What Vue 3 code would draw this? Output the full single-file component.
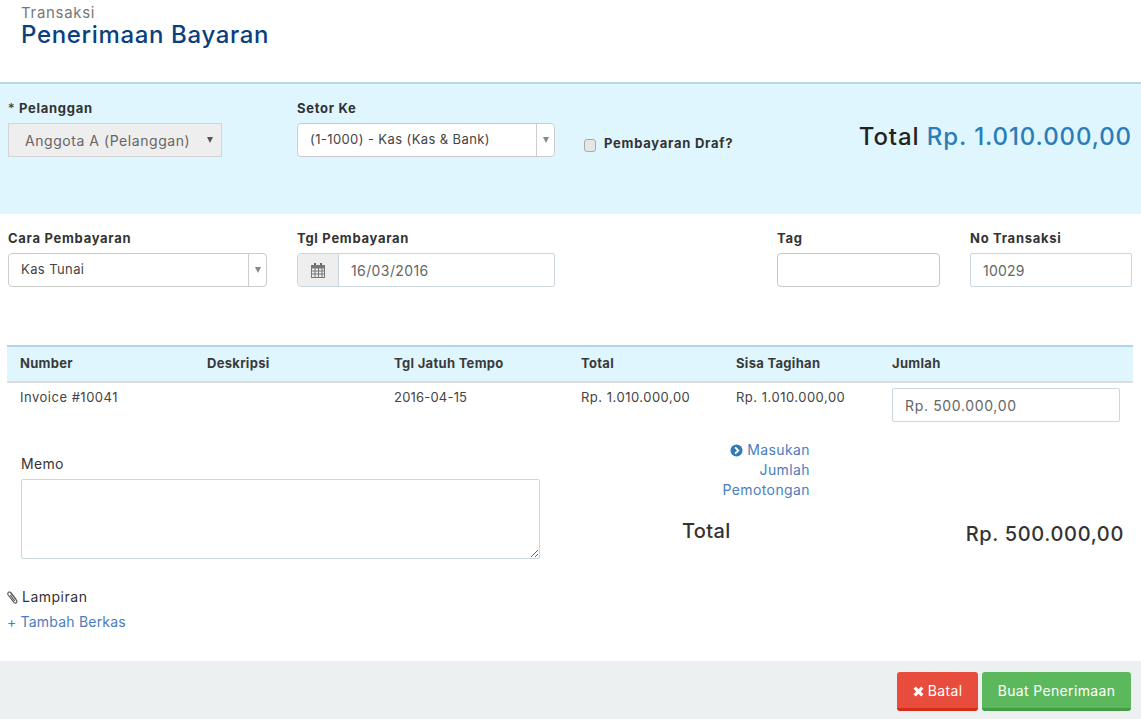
<template>
	<div class="page">
		<!-- Header -->
		<header class="page-head">
			<div class="crumb">Transaksi</div>
			<h1 class="title">Penerimaan Bayaran</h1>
		</header>

		<!-- Customer panel -->
		<section class="panel">
			<div class="field field-customer">
				<label class="label"><span class="req">*</span> Pelanggan</label>
				<div class="select-disabled">
					<span>Anggota A (Pelanggan)</span>
					<span class="caret caret-dark"></span>
				</div>
			</div>
			<div class="field field-deposit">
				<label class="label">Setor Ke</label>
				<div class="combo">
					<span class="combo-text">(1-1000) - Kas (Kas &amp; Bank)</span>
					<span class="combo-arrow"><span class="caret"></span></span>
				</div>
			</div>
			<label class="draft">
				<input type="checkbox" class="draft-check" />
				<span>Pembayaran Draf?</span>
			</label>
			<div class="grand-total">Total <span class="grand-amount">Rp. 1.010.000,00</span></div>
		</section>

		<!-- Payment fields -->
		<section class="payment">
			<div class="field field-method">
				<label class="label">Cara Pembayaran</label>
				<div class="combo">
					<span class="combo-text">Kas Tunai</span>
					<span class="combo-arrow"><span class="caret"></span></span>
				</div>
			</div>
			<div class="field field-date">
				<label class="label">Tgl Pembayaran</label>
				<div class="date-group">
					<span class="date-addon">
						<svg class="cal-icon" viewBox="0 0 14 15">
							<path fill="#666" d="M3 0h2v3H3zM9 0h2v3H9z" />
							<path fill="#777" fill-rule="evenodd" d="M0 2h14v13H0zM1 5.500v2h2.500v-2zm3.500 0v2H7v-2zm3.500 0v2h2.500v-2zm3.500 0v2H13v-2zM1 8.500v2h2.500v-2zm3.500 0v2H7v-2zm3.500 0v2h2.500v-2zm3.500 0v2H13v-2zM1 11.500V14h2.500v-2.500zm3.500 0V14H7v-2.500zm3.500 0V14h2.500v-2.500zm3.500 0V14H13v-2.500z" />
						</svg>
					</span>
					<input class="date-input" value="16/03/2016" />
				</div>
			</div>
			<div class="field field-tag">
				<label class="label">Tag</label>
				<input class="input input-tag" />
			</div>
			<div class="field field-no">
				<label class="label">No Transaksi</label>
				<input class="input" value="10029" />
			</div>
		</section>

		<!-- Invoice table -->
		<section class="table-wrap">
			<div class="row row-head">
				<div v-for="col in columns" :key="col" class="cell">{{ col }}</div>
			</div>
			<div class="row row-body">
				<div class="cell">Invoice #10041</div>
				<div class="cell"></div>
				<div class="cell cell-date">2016-04-15</div>
				<div class="cell">Rp. 1.010.000,00</div>
				<div class="cell">Rp. 1.010.000,00</div>
				<div class="cell cell-amount"><input class="input input-amount" value="Rp. 500.000,00" /></div>
			</div>
		</section>

		<!-- Memo and totals -->
		<section class="lower">
			<div class="memo">
				<label class="memo-label">Memo</label>
				<textarea class="memo-box"></textarea>
			</div>
			<div class="summary">
				<a class="deduct">
					<svg class="chev-icon" viewBox="0 0 14 14">
						<circle cx="7" cy="7" r="6.500" fill="#337ab7" />
						<path d="M5.500 3.600 9 7l-3.500 3.400" fill="none" stroke="#fff" stroke-width="2" />
					</svg>
					Masukan Jumlah Pemotongan
				</a>
				<div class="sum-row">
					<span class="sum-label">Total</span>
					<span class="sum-value">Rp. 500.000,00</span>
				</div>
			</div>
		</section>

		<!-- Attachments -->
		<section class="attach">
			<div class="attach-title">
				<svg class="clip-icon" viewBox="0 0 11 13">
					<path d="M3.600 1.800 9.400 9.200c1.500 2-1 3.900-2.600 2L1.200 4C-.2 2 2.300-.2 3.900 1.700l5 6.400M3.200 4l4.600 6" fill="none" stroke="#5a5a5a" stroke-width="1.200" />
				</svg>
				Lampiran
			</div>
			<a class="add-file">+ Tambah Berkas</a>
		</section>

		<!-- Footer actions -->
		<footer class="actions">
			<button class="btn btn-cancel">
				<svg class="x-icon" viewBox="0 0 10 10">
					<path d="M1.500 1.500l7 7m0-7l-7 7" stroke="#fff" stroke-width="3" />
				</svg>
				Batal
			</button>
			<button class="btn btn-submit">Buat Penerimaan</button>
		</footer>
	</div>
</template>

<script setup>
const columns = ['Number', 'Deskripsi', 'Tgl Jatuh Tempo', 'Total', 'Sisa Tagihan', 'Jumlah']
</script>

<style>
html,
body {
	margin: 0;
	background: #fff;
}
</style>

<style scoped>
.page {
	width: 1141px;
	height: 719px;
	overflow: hidden;
	font-family: 'Inter', 'Liberation Sans', sans-serif;
	font-size: 13px;
	letter-spacing: 0.5px;
	color: #333;
	display: flex;
	flex-direction: column;
}

a {
	color: #4a7dbd;
}

/* Header */
.page-head {
	height: 82px;
	box-sizing: border-box;
	padding: 4px 0 0 21px;
}

.crumb {
	font-size: 15px;
	line-height: 17px;
	letter-spacing: 0.7px;
	color: #777;
}

.title {
	margin: 0;
	font-size: 24px;
	font-weight: 500;
	line-height: 28px;
	letter-spacing: 0.65px;
	color: #0b3f80;
}

/* Shared field bits */
.field {
	display: flex;
	flex-direction: column;
}

.label {
	font-weight: 700;
	font-size: 13px;
	line-height: 15px;
	height: 15px;
	margin-bottom: 7px;
	letter-spacing: 0.72px;
	color: #333;
}

.req {
	font-weight: 400;
}

.input {
	box-sizing: border-box;
	width: 100%;
	height: 34px;
	border: 1px solid #ccd6dd;
	border-radius: 2px;
	padding: 0 12px;
	font: inherit;
	font-size: 14px;
	letter-spacing: 0.2px;
	color: #666;
	background: #fff;
	outline: none;
}

.input-tag {
	border-color: #c4c9cc;
	border-radius: 4px;
}

.input-amount {
	letter-spacing: 0.65px;
}

.caret {
	width: 0;
	height: 0;
	border-left: 3px solid transparent;
	border-right: 3px solid transparent;
	border-top: 6px solid #888;
}

.caret-dark {
	border-top-color: #555;
}

.combo {
	box-sizing: border-box;
	height: 34px;
	display: flex;
	align-items: center;
	border: 1px solid #ccc;
	border-radius: 4px;
	background: #fff;
}

.combo-text {
	flex: 1;
	padding: 0 0 2px 12px;
	letter-spacing: 0.4px;
	color: #444;
}

.combo-arrow {
	width: 17px;
	height: 100%;
	display: flex;
	align-items: center;
	justify-content: center;
	border-left: 1px solid #ccc;
}

/* Blue panel */
.panel {
	height: 132px;
	box-sizing: border-box;
	border-top: 2px solid #b9d9e8;
	background: #dff6ff;
	padding: 17px 9px 0 8px;
	display: flex;
	align-items: flex-start;
}

.field-customer {
	width: 214px;
	margin-right: 75px;
}

.field-deposit {
	width: 258px;
	margin-right: 29px;
}

.select-disabled {
	box-sizing: border-box;
	height: 34px;
	display: flex;
	align-items: center;
	justify-content: space-between;
	padding: 0 8px 0 16px;
	border: 1px solid #d5d5d5;
	background: #eee;
	font-size: 14px;
	letter-spacing: 0.55px;
	color: #666;
}

.draft {
	display: flex;
	align-items: center;
	margin-top: 33px;
	font-weight: 700;
	letter-spacing: 0.75px;
}

.draft-check {
	appearance: none;
	box-sizing: border-box;
	width: 12px;
	height: 13px;
	margin: 5px 8px 0 0;
	border: 1px solid #aaa;
	border-radius: 3px;
	background: #e6e6e6;
}

.grand-total {
	margin-left: auto;
	margin-top: 22px;
	font-size: 24px;
	font-weight: 500;
	line-height: 28px;
	letter-spacing: 0.9px;
	color: #222;
}

.grand-amount {
	color: #2a7db8;
}

/* Payment fields */
.payment {
	box-sizing: border-box;
	height: 131px;
	padding: 17px 9px 0 8px;
	display: flex;
	align-items: flex-start;
}

.field-method {
	width: 259px;
	margin-right: 30px;
}

.field-date {
	width: 258px;
	margin-right: 222px;
}

.field-tag {
	width: 163px;
	margin-right: 30px;
}

.field-no {
	width: 162px;
}

.date-group {
	box-sizing: border-box;
	height: 34px;
	display: flex;
	border: 1px solid #ccd6dd;
	border-radius: 4px 2px 2px 4px;
	background: #fff;
	overflow: hidden;
}

.date-addon {
	width: 40px;
	display: flex;
	align-items: center;
	justify-content: center;
	background: #eee;
	border-right: 1px solid #ccd6dd;
}

.cal-icon {
	width: 14px;
	height: 15px;
}

.date-input {
	flex: 1;
	min-width: 0;
	border: 0;
	padding: 0 12px;
	font: inherit;
	font-size: 14px;
	letter-spacing: 0.4px;
	color: #666;
	outline: none;
}

/* Table */
.table-wrap {
	margin: 0 8px 0 7px;
}

.row {
	display: grid;
	grid-template-columns: 187px 187px 187px 155px 156px 1fr;
	padding-left: 13px;
}

.row-head {
	height: 38px;
	box-sizing: border-box;
	align-items: center;
	padding-bottom: 2px;
	border-top: 2px solid #b0d5e8;
	border-bottom: 2px solid #ddd;
	background: #dff6ff;
	font-weight: 700;
	letter-spacing: 0.3px;
	color: #3a3a3a;
}

.row-body {
	padding-top: 5px;
	height: 45px;
	box-sizing: border-box;
	line-height: 18px;
	color: #444;
}

.cell-date {
	letter-spacing: 0.2px;
}

.cell-amount {
	padding-right: 13px;
}

/* Memo and totals */
.lower {
	height: 153px;
	display: flex;
	align-items: flex-start;
}

.memo {
	width: 519px;
	margin: 28px 0 0 21px;
	display: flex;
	flex-direction: column;
}

.memo-label {
	font-size: 14px;
	line-height: 16px;
	margin-bottom: 7px;
	letter-spacing: 0.3px;
}

.memo-box {
	box-sizing: border-box;
	width: 519px;
	height: 80px;
	border: 1px solid #ccd6dd;
	border-radius: 2px;
	outline: none;
}

.summary {
	flex: 1;
	display: flex;
	flex-direction: column;
	padding: 12px 0 0 143px;
}

.deduct {
	width: 127px;
	padding-left: 27px;
	box-sizing: border-box;
	text-align: right;
	font-size: 14px;
	letter-spacing: 0.4px;
	line-height: 20px;
}

.chev-icon {
	width: 13px;
	height: 13px;
	vertical-align: -2px;
}

.sum-row {
	display: flex;
	justify-content: space-between;
	padding-right: 17px;
	margin-top: 19px;
	font-size: 20px;
	font-weight: 500;
	letter-spacing: 0.65px;
	color: #333;
}

.sum-label {
	margin-left: -1px;
	letter-spacing: 0.35px;
}

.sum-value {
	margin-top: 3px;
}

/* Attachments */
.attach {
	height: 80px;
	box-sizing: border-box;
	padding: 7px 0 0 7px;
}

.attach-title {
	display: flex;
	align-items: center;
	gap: 4px;
	font-size: 14px;
	line-height: 18px;
}

.clip-icon {
	width: 11px;
	height: 13px;
}

.add-file {
	display: block;
	margin: 7px 0 0 0;
	font-size: 14px;
	letter-spacing: 0.2px;
	line-height: 18px;
}

/* Footer */
.actions {
	flex: 1;
	background: #ecf0f1;
	display: flex;
	justify-content: flex-end;
	align-items: flex-start;
	gap: 4px;
	padding: 11px 10px 0 0;
}

.btn {
	height: 39px;
	box-sizing: border-box;
	border: 0;
	border-bottom: 3px solid;
	border-radius: 3px;
	color: #fff;
	font: inherit;
	font-size: 14px;
	letter-spacing: 0.35px;
	cursor: pointer;
}

.btn-cancel {
	width: 81px;
	background: #e74c3c;
	border-color: #d62c1a;
}

.btn-submit {
	width: 149px;
	background: #5cb85c;
	border-color: #449d44;
}

.x-icon {
	width: 11px;
	height: 11px;
	vertical-align: -1px;
}
</style>
